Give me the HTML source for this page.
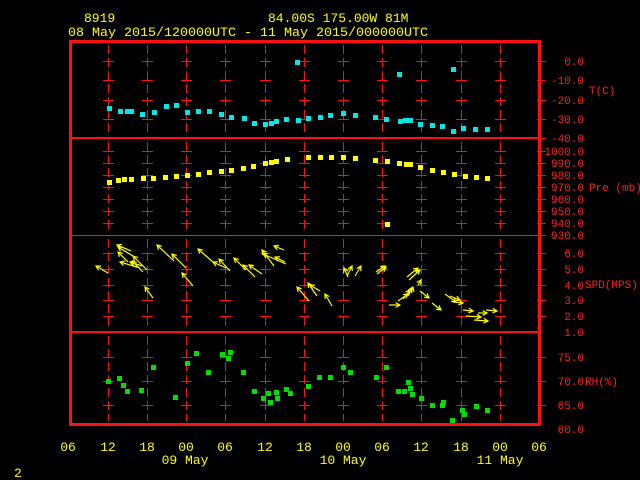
<!DOCTYPE html>
<html><head><meta charset="utf-8"><style>
html,body{margin:0;padding:0;background:#000;width:640px;height:480px;overflow:hidden}
svg{display:block}
.y{fill:#ffff00;font-family:"Liberation Mono",monospace;font-size:13px}
.r{fill:#ff2020;font-family:"Liberation Mono",monospace;font-size:11px}
</style></head><body>
<svg id="s" width="640" height="480" xmlns="http://www.w3.org/2000/svg">
<g id="g"></g>
<text class="y" x="84" y="22">8919</text>
<text class="y" x="268" y="22">84.00S  175.00W    81M</text>
<text class="y" x="68" y="36" textLength="360" lengthAdjust="spacingAndGlyphs">08 May 2015/120000UTC - 11 May 2015/000000UTC</text>
<g class="r" text-anchor="end">
<text x="584" y="65">0.0</text><text x="584" y="84">-10.0</text><text x="584" y="104">-20.0</text><text x="584" y="123">-30.0</text><text x="584" y="142">-40.0</text>
<text x="584" y="155">1000.0</text><text x="584" y="167">990.0</text><text x="584" y="179">980.0</text><text x="584" y="191">970.0</text><text x="584" y="203">960.0</text><text x="584" y="215">950.0</text><text x="584" y="227">940.0</text><text x="584" y="239">930.0</text>
<text x="584" y="257">6.0</text><text x="584" y="273">5.0</text><text x="584" y="289">4.0</text><text x="584" y="304">3.0</text><text x="584" y="320">2.0</text><text x="584" y="336">1.0</text>
<text x="584" y="361">75.0</text><text x="584" y="385">70.0</text><text x="584" y="409">65.0</text><text x="584" y="433">60.0</text>
</g>
<g class="r"><text x="589" y="94">T(C)</text><text x="589" y="191">Pre (mb)</text><text x="585" y="288">SPD(MPS)</text><text x="585" y="385">RH(%)</text></g>
<g class="y" text-anchor="middle">
<text x="68" y="451">06</text><text x="108" y="451">12</text><text x="147" y="451">18</text><text x="186" y="451">00</text><text x="225" y="451">06</text><text x="265" y="451">12</text><text x="304" y="451">18</text><text x="343" y="451">00</text><text x="382" y="451">06</text><text x="421" y="451">12</text><text x="461" y="451">18</text><text x="500" y="451">00</text><text x="539" y="451">06</text>
<text x="185" y="464">09 May</text><text x="343" y="464">10 May</text><text x="500" y="464">11 May</text>
</g>
<text class="y" x="14" y="477" font-size="11">2</text>
</svg>
<script>
var g=document.getElementById('g'),NS='http://www.w3.org/2000/svg';
function el(t,a){var e=document.createElementNS(NS,t);for(var k in a)e.setAttribute(k,a[k]);g.appendChild(e);return e;}
var R='#ff1010';
var xs=[108,147,186,225,265,304,343,382,421,461,500];
var ty=[61,80,100,119],py=[151,163,175,187,199,211,223],sy=[253,269,285,300,316],hy=[357,381,405];
var all=ty.concat(py,sy,hy);
[[45,134],[142,231],[239,328],[336,421]].forEach(function(s){xs.forEach(function(x){el('line',{x1:x+0.5,y1:s[0],x2:x+0.5,y2:s[1],stroke:R,'stroke-width':1,'stroke-dasharray':'9,4','shape-rendering':'crispEdges'});});});
all.forEach(function(y){xs.forEach(function(x){el('line',{x1:x-5,y1:y+0.5,x2:x+6,y2:y+0.5,stroke:R,'stroke-width':1,'shape-rendering':'crispEdges'});});
el('line',{x1:537,y1:y+0.5,x2:546,y2:y+0.5,stroke:R,'stroke-width':1,'shape-rendering':'crispEdges'});});
[138,235].forEach(function(y){el('line',{x1:537,y1:y+0.5,x2:546,y2:y+0.5,stroke:R,'shape-rendering':'crispEdges'});});
el('line',{x1:70,y1:138,x2:540,y2:138,stroke:R,'stroke-width':2,'shape-rendering':'crispEdges'});
el('line',{x1:70,y1:235.5,x2:540,y2:235.5,stroke:'#a04040','stroke-width':1,'shape-rendering':'crispEdges'});
el('line',{x1:70,y1:332,x2:540,y2:332,stroke:R,'stroke-width':2,'shape-rendering':'crispEdges'});
el('rect',{x:70.5,y:41.5,width:469,height:383,fill:'none',stroke:R,'stroke-width':3,'shape-rendering':'crispEdges'});
function pts(c,a){a.forEach(function(p){el('rect',{x:p[0]-2,y:p[1]-2,width:5,height:5,fill:c});});}
pts('#00e8e8',[[109,108],[120,111],[127,111],[131,111],[142,114],[154,112],[166,106],[176,105],[187,112],[198,111],[209,111],[221,114],[231,117],[244,118],[254,123],[265,124],[271,123],[276,121],[286,119],[297,62],[298,120],[308,118],[320,117],[330,115],[343,113],[355,115],[375,117],[386,119],[399,74],[400,121],[405,120],[410,120],[420,124],[432,125],[442,126],[453,69],[453,131],[463,128],[475,129],[487,129]]);
pts('#ffff00',[[109,182],[118,180],[124,179],[131,179],[143,178],[153,178],[165,177],[176,176],[187,175],[198,174],[209,172],[221,171],[231,170],[243,168],[253,166],[265,163],[271,162],[276,161],[287,159],[308,157],[320,157],[331,157],[343,157],[355,158],[375,160],[387,161],[387,224],[399,163],[406,164],[410,164],[420,167],[432,170],[443,172],[454,174],[465,176],[476,177],[487,178]]);
pts('#00e000',[[108,381],[119,378],[123,385],[127,391],[141,390],[153,367],[175,397],[187,363],[196,353],[208,372],[222,354],[228,358],[230,352],[243,372],[254,391],[263,398],[268,393],[270,402],[276,392],[277,398],[286,389],[290,393],[308,386],[319,377],[330,377],[343,367],[350,372],[376,377],[386,367],[398,391],[404,391],[408,382],[410,388],[412,394],[421,398],[432,405],[442,405],[443,402],[452,420],[462,410],[464,414],[476,406],[487,410]]);
var A=[[131,251,117,245],[133,256,118,247],[128,262,118,252],[140,268,120,262],[142,266,130,262],[147,270,133,256],[143,272,132,261],[108,273,96,266],[153,298,145,287],[174,261,157,245],[186,268,172,254],[193,286,182,273],[213,262,198,249],[226,268,213,262],[230,271,219,259],[246,270,234,258],[255,277,243,265],[262,274,249,265],[274,266,262,250],[286,264,263,254],[284,250,274,246],[285,262,275,257],[309,301,297,287],[317,296,308,283],[320,291,310,285],[332,306,325,294],[348,277,344,268],[355,276,361,266],[347,276,352,266],[376,272,385,266],[377,274,386,267],[407,277,418,268],[409,280,420,270],[389,305,400,305],[398,301,408,294],[403,299,410,290],[408,296,411,288],[411,293,413,287],[418,285,421,280],[420,291,429,298],[432,303,441,310],[445,294,456,302],[450,296,460,300],[453,302,463,303],[463,310,473,311],[466,316,481,317],[478,313,487,313],[474,320,488,321],[486,310,497,311]];
A.forEach(function(a){var dx=a[2]-a[0],dy=a[3]-a[1],L=Math.hypot(dx,dy),ux=dx/L,uy=dy/L,h=5;
el('line',{x1:a[0],y1:a[1],x2:a[2],y2:a[3],stroke:'#ffff00','stroke-width':1.2});
var c=Math.cos(0.5),s=Math.sin(0.5);
var p1=[a[2]-h*(ux*c-uy*s),a[3]-h*(uy*c+ux*s)],p2=[a[2]-h*(ux*c+uy*s),a[3]-h*(uy*c-ux*s)];
el('polyline',{points:p1.join(',')+' '+a[2]+','+a[3]+' '+p2.join(','),fill:'none',stroke:'#ffff00','stroke-width':1.2});});
</script>
</body></html>
